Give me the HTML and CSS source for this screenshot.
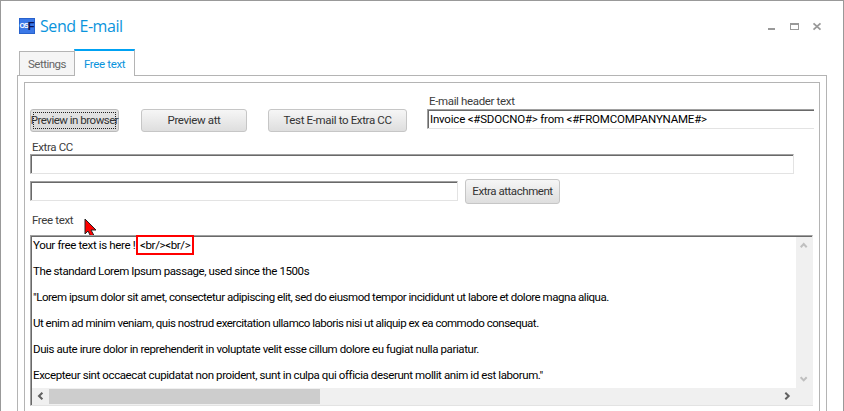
FILE: index.html
```html
<!DOCTYPE html>
<html lang="en">
<head>
<meta charset="utf-8">
<title>Send E-mail</title>
<link rel="stylesheet" href="styles.css">
</head>
<body>
<div class="window">
  <header class="titlebar">
    <span class="logo"><span class="logo-os">os</span><b>F</b></span>
    <h1>Send E-mail</h1>
    <svg class="controls" width="54" height="8" viewBox="0 0 54 8" shape-rendering="crispEdges">
      <path fill="#999" d="M-1 5h7v2h-7z"/>
      <path fill="#999" fill-rule="evenodd" d="M21 0h9v7h-9zM22 2v4h7V2z"/>
      <path stroke="#999" stroke-width="1.8" shape-rendering="auto" d="M44.500 .3l7 6.4M51.500 .3l-7 6.4"/>
    </svg>
  </header>
  <nav class="tabs">
    <span class="tab t-settings">Settings</span>
    <span class="tab active t-free">Free text</span>
  </nav>
  <main class="outer">
    <div class="inner">
      <div class="row-top">
        <button class="btn b-preview"><span>Preview in browser</span></button>
        <button class="btn b-att"><span>Preview att</span></button>
        <button class="btn b-test"><span>Test E-mail to Extra CC</span></button>
        <div class="header-group">
          <label class="l-header">E-mail header text</label>
          <div class="field f-header"><span>Invoice &lt;#SDOCNO#&gt; from &lt;#FROMCOMPANYNAME#&gt;</span></div>
        </div>
      </div>
      <label class="l-cc">Extra CC</label>
      <div class="field f-cc"></div>
      <div class="row-attach">
        <div class="field f-attach"></div>
        <button class="btn b-extra"><span>Extra attachment</span></button>
      </div>
      <label class="l-free">Free text
        <svg class="cursor" width="15" height="20" viewBox="0 0 15 20"><path fill="#f00" stroke="#222" d="M1 1v15l3-3 3 6 3-1.5-3-5.500h5z"/></svg>
      </label>
      <div class="editor">
        <div class="text">
          <p class="p1"><span>Your free text is here !</span><mark>&lt;br/&gt;&lt;br/&gt;</mark></p>
          <p class="p2">The standard Lorem Ipsum passage, used since the 1500s</p>
          <p class="p3">"Lorem ipsum dolor sit amet, consectetur adipiscing elit, sed do eiusmod tempor incididunt ut labore et dolore magna aliqua.</p>
          <p class="p4">Ut enim ad minim veniam, quis nostrud exercitation ullamco laboris nisi ut aliquip ex ea commodo consequat.</p>
          <p class="p5">Duis aute irure dolor in reprehenderit in voluptate velit esse cillum dolore eu fugiat nulla pariatur.</p>
          <p class="p6">Excepteur sint occaecat cupidatat non proident, sunt in culpa qui officia deserunt mollit anim id est laborum."</p>
        </div>
        <div class="vscroll">
          <svg width="8" height="7" viewBox="0 0 8 7"><path d="M.7 5.2L3.7 2l3 3.2"/></svg>
          <svg width="8" height="7" viewBox="0 0 8 7"><path d="M.7 1.2L3.7 4.4l3-3.2"/></svg>
        </div>
        <div class="hscroll">
          <svg width="7" height="8" viewBox="0 0 7 8"><path d="M5.4.7L2 4l3.4 3.3"/></svg>
          <div class="thumb"></div>
          <svg width="7" height="8" viewBox="0 0 7 8"><path d="M1.3.7L4.7 4 1.3 7.3"/></svg>
        </div>
      </div>
    </div>
  </main>
</div>
</body>
</html>
```

FILE: styles.css
```css
* { box-sizing: border-box; margin: 0; }
html, body { height: 100%; overflow: hidden; background: #fff; }
body { font: 11.5px/14px Roboto, sans-serif; color: #3c3c3c; }
.window { height: 411px; border: 1px solid #999; border-bottom: 0; overflow: hidden; }
.titlebar { display: flex; height: 48px; padding: 17px 20px 0 18px; }
.logo { display: flex; align-items: center; justify-content: center; width: 16px; height: 16px; background: #3b78e7; border: 1px solid #2862cc; color: #fff; font: bold 8px/14px "Liberation Sans", sans-serif; letter-spacing: -1px; }
.logo-os { text-transform: uppercase; font-size: 7px; }
.logo b { font-size: 11px; color: #0b1450; letter-spacing: 0; }
h1 { margin: -2px 0 0 5px; font: 16px/20px "Open Sans", sans-serif; letter-spacing: -.42px; color: #0a94dc; white-space: nowrap; }
.controls { margin: 5px 0 0 auto; overflow: visible; }
.tabs { display: flex; align-items: flex-end; height: 27px; padding-left: 18px; position: relative; z-index: 1; margin-bottom: -1px; }
.tab { height: 25px; border: 1px solid #b4b4b4; border-right: 0; background: #f5f5f5; color: #666; line-height: 25px; width: 55px; padding-left: 8px; white-space: nowrap; letter-spacing: -.5px; }
.tab.active { height: 27px; width: 61px; background: #fff; border: 1px solid #b4b4b4; border-top: 2px solid #00a2f3; border-bottom: 0; color: #0a94dc; line-height: 26px; padding-left: 9px; letter-spacing: -.35px; }
.outer { width: 810px; height: 345px; margin-left: 16px; border: 1px solid #b4b4b4; border-bottom: 0; padding: 6px 6px 0; }
.inner { height: 340px; border: 1px solid #b4b4b4; border-bottom: 0; padding-left: 5px; }
.row-top { display: flex; align-items: flex-start; height: 57px; padding-top: 26px; }
.btn { display: flex; align-items: center; justify-content: center; padding: 0 0 1px; height: 23px; border: 1px solid #c6c6c6; border-radius: 3px; background: linear-gradient(#f6f6f6, #dedede); color: #333; font: inherit; white-space: nowrap; flex: none; }
.b-preview { width: 89px; position: relative; background: linear-gradient(#e4e4e4, #d9d9d9); border-color: #bbb; letter-spacing: -.5px; }
.b-preview::after { content: ""; position: absolute; inset: 2px; border: 1px dotted #222; }
.b-att { width: 106px; margin-left: 22px; letter-spacing: -.35px; }
.b-test { width: 139px; margin-left: 21px; letter-spacing: -.35px; }
.b-extra { width: 95px; height: 25px; margin-left: 7px; letter-spacing: -.45px; }
.header-group { margin: -15px 0 0 20px; width: 387px; }
label { display: block; position: relative; white-space: nowrap; letter-spacing: -.35px; }
.l-header { padding-left: 2px; height: 15px; }
.field { height: 20px; border: 1px solid #e3e3e3; border-top-color: #a0a0a0; border-left-color: #a0a0a0; box-shadow: inset 1px 1px #696969; background: #fff; color: #000; line-height: 18px; padding-left: 2px; white-space: nowrap; }
.f-header { border-right: 0; letter-spacing: -.2px; }
.l-cc { height: 14px; padding-left: 2px; }
.f-cc { width: 764px; }
.row-attach { display: flex; height: 30px; padding-top: 5px; }
.f-attach { width: 428px; margin-top: 2px; }
.l-free { height: 31px; padding: 9px 0 0 2px; }
.cursor { position: absolute; left: 54px; top: 14px; }
.editor { display: grid; grid-template: 151px 17px / 764px 17px; width: 783px; height: 171px; border: 1px solid #e3e3e3; border-top-color: #a0a0a0; border-left-color: #a0a0a0; position: relative; background: #fff; padding: 1px 0 0 1px; box-shadow: inset 1px 1px #696969; }
.text { color: #000; padding-left: 1px; }
.text p { height: 26px; line-height: 16px; white-space: nowrap; }
.p1 { position: relative; letter-spacing: -.36px; }
.p2 { letter-spacing: -.4px; }
.p3 { letter-spacing: -.47px; }
.p4 { letter-spacing: -.49px; }
.p5 { letter-spacing: -.41px; }
.p6 { letter-spacing: -.4px; }
mark { position: absolute; left: 103px; top: -2px; width: 58px; height: 20px; border: 2px solid #f00; background: #fff; color: #000; padding-left: 2px; letter-spacing: -.35px; }
.vscroll { background: #f0f0f0; display: flex; flex-direction: column; align-items: center; justify-content: space-between; padding: 5px 2px 5px 0; }
.hscroll { grid-column: 1 / 3; background: #f0f0f0; display: flex; align-items: center; padding: 0 22px 1px 5px; }
.hscroll svg:last-child { margin-left: auto; }
.vscroll path, .hscroll path { fill: none; stroke: #606060; stroke-width: 2; }
.vscroll path { stroke: #bfbfbf; }
.thumb { width: 271px; height: 15px; margin-left: 5px; background: #cdcdcd; }
```
